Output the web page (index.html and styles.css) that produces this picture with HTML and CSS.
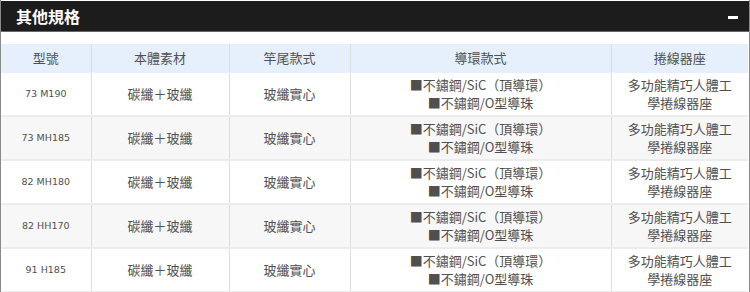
FILE: index.html
```html
<!DOCTYPE html>
<html lang="zh-Hant">
<head>
<meta charset="utf-8">
<link rel="stylesheet" href="styles.css">
</head>
<body>
<div class="panel">
  <div class="panel-head">
    <h2 class="panel-title">其他規格</h2>
    <span class="toggle"></span>
  </div>
  <div class="panel-body">
    <table class="spec">
      <colgroup>
        <col class="c1"><col class="c2"><col class="c3"><col class="c4"><col class="c5">
      </colgroup>
      <thead>
        <tr><th>型號</th><th>本體素材</th><th>竿尾款式</th><th>導環款式</th><th>捲線器座</th></tr>
      </thead>
      <tbody>
        <tr><td class="model">73 M190</td><td>碳纖＋玻纖</td><td>玻纖實心</td><td><span class="ln">■不鏽鋼/SiC（頂導環）</span><span class="ln">■不鏽鋼/O型導珠</span></td><td><span class="ln">多功能精巧人體工</span><span class="ln">學捲線器座</span></td></tr>
        <tr><td class="model">73 MH185</td><td>碳纖＋玻纖</td><td>玻纖實心</td><td><span class="ln">■不鏽鋼/SiC（頂導環）</span><span class="ln">■不鏽鋼/O型導珠</span></td><td><span class="ln">多功能精巧人體工</span><span class="ln">學捲線器座</span></td></tr>
        <tr><td class="model">82 MH180</td><td>碳纖＋玻纖</td><td>玻纖實心</td><td><span class="ln">■不鏽鋼/SiC（頂導環）</span><span class="ln">■不鏽鋼/O型導珠</span></td><td><span class="ln">多功能精巧人體工</span><span class="ln">學捲線器座</span></td></tr>
        <tr><td class="model">82 HH170</td><td>碳纖＋玻纖</td><td>玻纖實心</td><td><span class="ln">■不鏽鋼/SiC（頂導環）</span><span class="ln">■不鏽鋼/O型導珠</span></td><td><span class="ln">多功能精巧人體工</span><span class="ln">學捲線器座</span></td></tr>
        <tr><td class="model">91 H185</td><td>碳纖＋玻纖</td><td>玻纖實心</td><td><span class="ln">■不鏽鋼/SiC（頂導環）</span><span class="ln">■不鏽鋼/O型導珠</span></td><td><span class="ln">多功能精巧人體工</span><span class="ln">學捲線器座</span></td></tr>
      </tbody>
    </table>
  </div>
</div>
</body>
</html>
```
FILE: styles.css
```css
* { box-sizing: border-box; }
html, body { margin: 0; padding: 0; background: #fff; }
body {
  font-family: "Noto Sans CJK TC", "Noto Sans", sans-serif;
  color: #505050;
}
.panel {
  width: 750px;
  border-left: 1px solid #8a8a8a;
  border-right: 1px solid #8a8a8a;
  padding-top: 1px;
  height: 292px;
  overflow: hidden;
}
.panel-head {
  height: 31px;
  background: #1c1c1c;
  border-bottom: 1px solid #666;
  display: flex;
  align-items: center;
  justify-content: space-between;
  padding: 0 11px 0 15px;
}
.panel-title {
  margin: 0;
  color: #fff;
  font-size: 16px;
  font-weight: 700;
  line-height: 1;
  margin-top: -1px;
}
.toggle {
  width: 10px;
  height: 3px;
  background: #fff;
  margin-top: 2px;
}
.panel-body {
  padding: 12px 1px 0 0;
}
.spec {
  width: 100%;
  border-collapse: collapse;
  table-layout: fixed;
}
.c1 { width: 90px; }
.c2 { width: 138px; }
.c3 { width: 121px; }
.c4 { width: 261px; }
.c5 { width: auto; }
.spec th, .spec td {
  text-align: center;
  vertical-align: middle;
  border-left: 1px solid #dcdcdc;
  border-bottom: 2px solid #ececec;
  font-size: 13px;
  line-height: 18px;
  padding: 0;
}
.spec th:first-child, .spec td:first-child { border-left: none; }
.spec th {
  height: 28px;
  background: #e6f0fc;
  font-weight: 400;
  border-bottom: 1px solid #e6f0fc;
}
.spec td { height: 44px; }
.spec tbody tr:nth-child(even) td { background: #f7f7f7; }
.ln { display: block; }
.spec td.model {
  font-family: "DejaVu Sans", sans-serif;
  font-size: 9.5px;
}
```
